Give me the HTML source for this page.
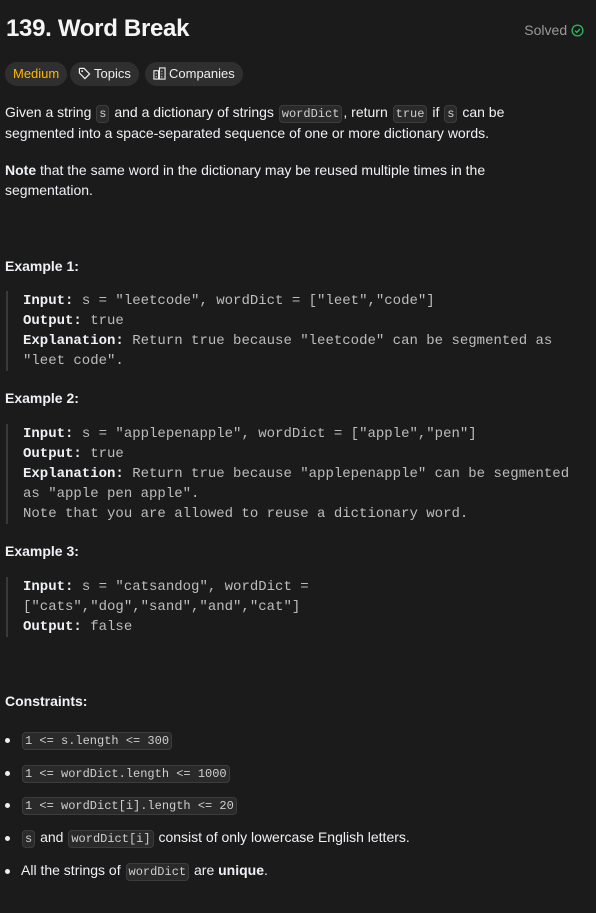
<!DOCTYPE html>
<html><head><style>
body{margin:0;background:#1b1b1b;color:#eff1f6;font-family:"Liberation Sans",sans-serif;font-size:14px;width:596px;height:913px;overflow:hidden;position:relative}
.a{position:absolute;left:5px;white-space:nowrap}
h1{position:absolute;left:6px;top:15px;margin:0;font-size:24px;font-weight:bold;color:#f5f5f5;letter-spacing:-0.3px}
.solved{position:absolute;right:12px;top:22px;color:#9a9a9a;font-size:14px}
.tag{position:absolute;top:62px;height:24px;border-radius:12px;background:#2f2f2f;font-size:13px;line-height:24px;padding:0 8px;color:#eee}
code{font-family:"Liberation Mono",monospace;font-size:12px;background:#2a2a2a;border:1px solid #3c3c3c;border-radius:4px;padding:1px 2px;margin:0 1px;color:#cfcfcf}
.pre{position:absolute;left:6px;border-left:2px solid #3a3a3a;padding-left:15px;font-family:"Liberation Mono",monospace;font-size:14px;line-height:20px;color:#bdbdbd;white-space:pre}
.pre b{color:#eff1f6}
.bul{position:absolute;left:5px;width:5px;height:5px;border-radius:50%;background:#eee}
</style></head><body>
<h1>139. Word Break</h1>
<div class="solved">Solved <svg width="13" height="13" viewBox="0 0 14 14" style="vertical-align:-2px"><circle cx="7" cy="7" r="5.8" fill="none" stroke="#2cbb5d" stroke-width="1.4"/><path d="M4.4 7.2l1.8 1.8 3.5-3.6" fill="none" stroke="#2cbb5d" stroke-width="1.4"/></svg></div>
<div class="tag" style="left:5px;color:#ffb800">Medium</div>
<div class="tag" style="left:70px"><svg width="13" height="13" viewBox="0 0 14 14" style="vertical-align:-2px;margin-right:3px"><path d="M1.5 2v4.5l6 6 5-5-6-6H2z" fill="none" stroke="#eee" stroke-width="1.3"/><circle cx="4.5" cy="4.5" r="1" fill="#eee"/></svg>Topics</div>
<div class="tag" style="left:145px"><svg width="13" height="13" viewBox="0 0 14 14" style="vertical-align:-2px;margin-right:3px"><rect x="1" y="4" width="5" height="9" fill="none" stroke="#eee" stroke-width="1.2"/><rect x="7" y="1" width="6" height="12" fill="none" stroke="#eee" stroke-width="1.2"/><path d="M9.5 4v1M9.5 7v1M9.5 10v1M3.5 7v1M3.5 10v1" stroke="#eee" stroke-width="1.2"/></svg>Companies</div>
<div class="a" style="top:104px">Given a string <code>s</code> and a dictionary of strings <code>wordDict</code>, return <code>true</code> if <code>s</code> can be</div>
<div class="a" style="top:125px">segmented into a space-separated sequence of one or more dictionary words.</div>
<div class="a" style="top:162px"><b>Note</b> that the same word in the dictionary may be reused multiple times in the</div>
<div class="a" style="top:182px">segmentation.</div>
<div class="a" style="top:258px"><b>Example 1:</b></div>
<div class="pre" style="top:291px"><b>Input:</b> s = "leetcode", wordDict = ["leet","code"]
<b>Output:</b> true
<b>Explanation:</b> Return true because "leetcode" can be segmented as
"leet code".</div>
<div class="a" style="top:390px"><b>Example 2:</b></div>
<div class="pre" style="top:424px"><b>Input:</b> s = "applepenapple", wordDict = ["apple","pen"]
<b>Output:</b> true
<b>Explanation:</b> Return true because "applepenapple" can be segmented
as "apple pen apple".
Note that you are allowed to reuse a dictionary word.</div>
<div class="a" style="top:543px"><b>Example 3:</b></div>
<div class="pre" style="top:577px"><b>Input:</b> s = "catsandog", wordDict =
["cats","dog","sand","and","cat"]
<b>Output:</b> false</div>
<div class="a" style="top:693px"><b>Constraints:</b></div>
<div class="bul" style="top:738px"></div><div class="a" style="left:21px;top:731px"><code>1 &lt;= s.length &lt;= 300</code></div>
<div class="bul" style="top:771px"></div><div class="a" style="left:21px;top:764px"><code>1 &lt;= wordDict.length &lt;= 1000</code></div>
<div class="bul" style="top:803px"></div><div class="a" style="left:21px;top:796px"><code>1 &lt;= wordDict[i].length &lt;= 20</code></div>
<div class="bul" style="top:836px"></div><div class="a" style="left:21px;top:829px"><code>s</code> and <code>wordDict[i]</code> consist of only lowercase English letters.</div>
<div class="bul" style="top:869px"></div><div class="a" style="left:21px;top:862px">All the strings of <code>wordDict</code> are <b>unique</b>.</div>
</body></html>
